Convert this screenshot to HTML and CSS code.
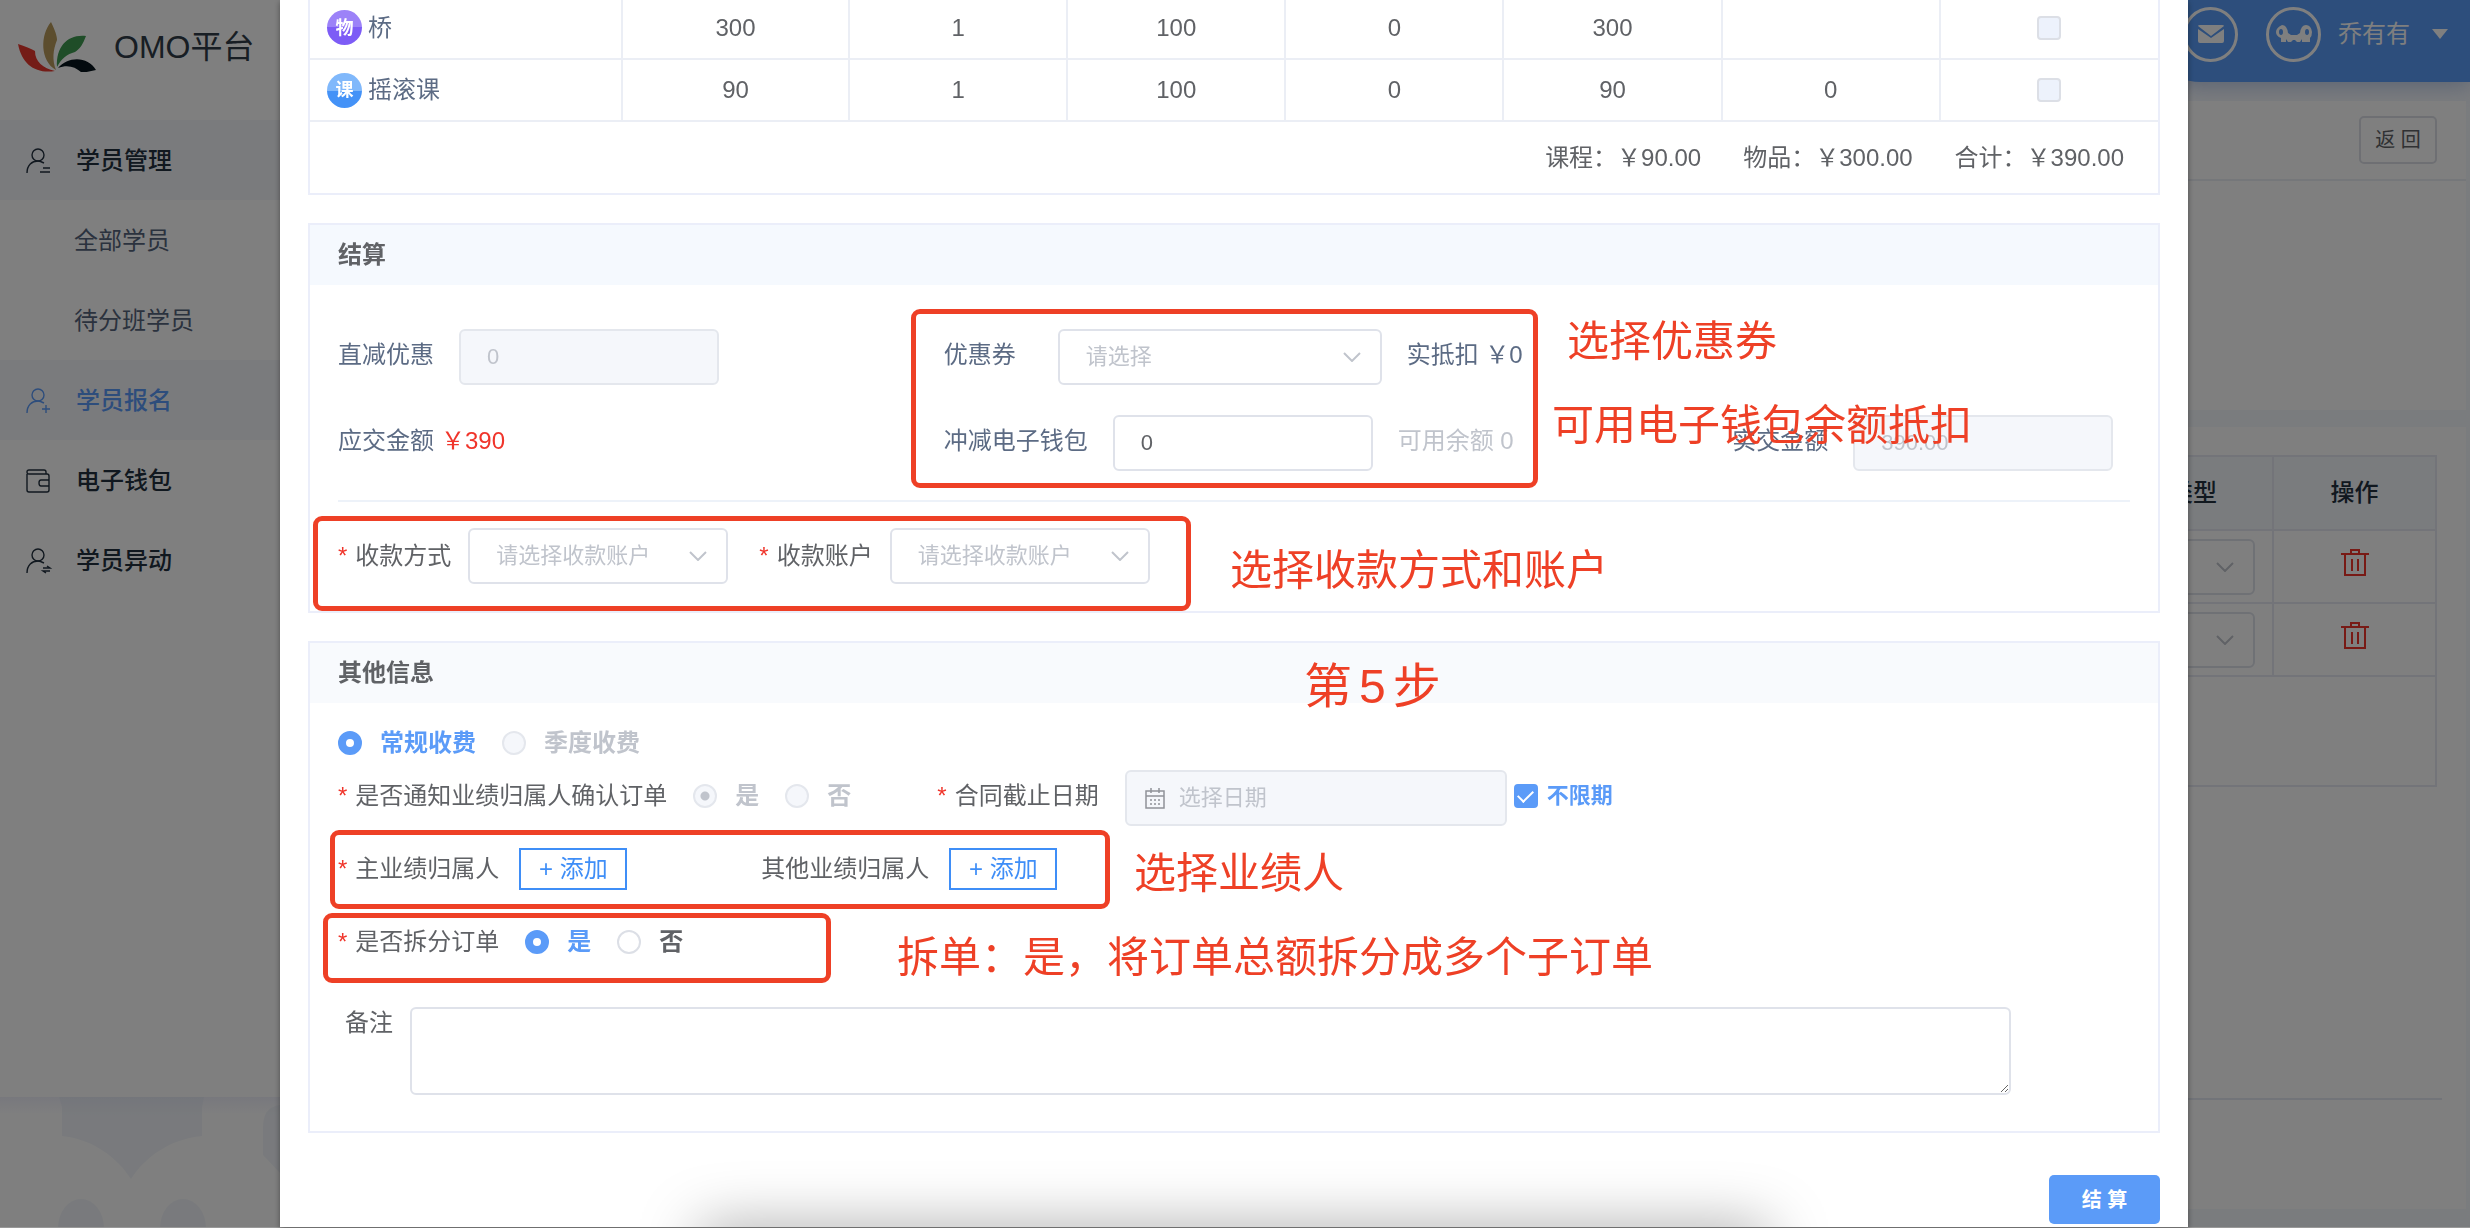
FILE: index.html
```html
<!DOCTYPE html>
<html lang="zh-CN">
<head>
<meta charset="utf-8">
<title>OMO平台</title>
<link rel="stylesheet" href="styles.css">
</head>
<body>
<div class="page">
  <aside class="sidebar">
    <div class="brand">
      <svg class="brand-logo" viewBox="0 0 78 50" aria-hidden="true">
        <path fill="#e8392f" d="M0 22C7 24 13 27 17 29C17 40 25 46 37 49C18 52 4 43 0 22Z"/>
        <path fill="#b89a5c" d="M33 0C37 8 39 14 39 18C35 28 34 38 38 48C22 39 22 13 33 0Z"/>
        <path fill="#3f9a50" d="M68 14C50 12 38 24 39 45C43 37 49 32 57 30C62 27 65 22 68 14Z"/>
        <path fill="#06141c" d="M40 46C50 34 70 34 78 48L64 51C58 45 50 42 40 46Z"/>
      </svg>
      <span>OMO平台</span>
    </div>
    <nav class="menu">
      <a class="menu-item is-open" href="#">
        <svg class="menu-icon" viewBox="0 0 24 24"><circle cx="12" cy="6" r="6"/><path d="M1 24c0-8 5-12 11-12c2 0 4 1 6 2M17 19h7M14 23h10"/></svg>
        <span>学员管理</span></a>
      <a class="menu-sub" href="#">全部学员</a>
      <a class="menu-sub" href="#">待分班学员</a>
      <a class="menu-item is-active" href="#">
        <svg class="menu-icon" viewBox="0 0 24 24"><circle cx="12" cy="6" r="6"/><path d="M1 24c0-8 5-12 11-12c2 0 4 1 6 2M16 20h8M20 16v8"/></svg>
        <span>学员报名</span></a>
      <a class="menu-item" href="#">
        <svg class="menu-icon" viewBox="0 0 24 24"><path d="M1 5v16q0 2 2 2h18q2 0 2-2V7q0-2-2-2H3q-2 0-2-2t2-2h15q2 0 2 2v2M23 11h-8q-2 0-2 3t2 3h8"/></svg>
        <span>电子钱包</span></a>
      <a class="menu-item" href="#">
        <svg class="menu-icon" viewBox="0 0 24 24"><circle cx="12" cy="6" r="6"/><path d="M1 24c0-8 5-12 11-12c2 0 4 1 6 2M17 19h7l-3-2M24 22h-7l3 2"/></svg>
        <span>学员异动</span></a>
    </nav>
    <div class="sidebar-foot">
      <svg class="pattern" viewBox="0 0 280 131" preserveAspectRatio="xMinYMin slice" aria-hidden="true">
        <path d="M59 0H204L202 10V39C170 42 145 60 131 82C117 60 92 42 62 39V10Z"/>
        <path d="M280 8Q263 10 263 30V58L280 76Z"/>
        <ellipse cx="81" cy="131" rx="23" ry="29"/><ellipse cx="183" cy="131" rx="23" ry="29"/>
      </svg>
    </div>
  </aside>
  <main class="main">
    <header class="topbar">
      <a class="round" href="#" aria-label="消息">
        <svg width="26" height="18" viewBox="0 0 26 18"><path fill="#fff" d="M2 0h22q2 0 2 1L13 11L0 1q0-1 2-1ZM0 4l13 9l13-9v12q0 2-2 2H2q-2 0-2-2Z"/></svg></a>
      <a class="round" href="#" aria-label="头像">
        <svg width="36" height="18" viewBox="0 0 36 18"><path fill="#fff" fill-rule="evenodd" d="M6 0q5 0 6 8l3 2h6l3-2q1-8 6-8t6 7q0 4-2 6v4h-8v-3l-2 3h-3l-2-2h-2l-2 2h-3l-2-3v3H5v-4Q0 11 0 7T6 0ZM5 4q-2 0-2 3t2 3t2-3t-2-3ZM31 4q-2 0-2 3t2 3t2-3t-2-3Z"/></svg></a>
      <span class="user-name">乔有有</span>
      <svg width="16" height="10" viewBox="0 0 16 10"><path fill="#fff" d="M0 0h16L8 10Z"/></svg>
    </header>
    <section class="panel panel-top">
      <div class="panel-head"><button class="back" type="button">返 回</button></div>
    </section>
    <section class="panel panel-list">
      <div class="list-box">
        <table class="list">
          <colgroup><col><col class="col-type"><col class="col-act"></colgroup>
          <thead><tr><th></th><th>类型</th><th>操作</th></tr></thead>
          <tbody>
            <tr><td></td><td><span class="select-box"><select aria-label="类型"><option></option></select><svg class="chev" viewBox="0 0 18 10"><path d="M1 1l8 8l8-8"/></svg></span></td>
              <td><button class="trash" type="button" aria-label="删除"><svg viewBox="0 0 28 28"><path d="M0 5h28M4 5v21h20V5M10 5V1h8v4M11 10v12M17 10v12"/></svg></button></td></tr>
            <tr><td></td><td><span class="select-box"><select aria-label="类型"><option></option></select><svg class="chev" viewBox="0 0 18 10"><path d="M1 1l8 8l8-8"/></svg></span></td>
              <td><button class="trash" type="button" aria-label="删除"><svg viewBox="0 0 28 28"><path d="M0 5h28M4 5v21h20V5M10 5V1h8v4M11 10v12M17 10v12"/></svg></button></td></tr>
          </tbody>
        </table>
      </div>
      <hr class="panel-rule">
    </section>
  </main>
</div>

<div class="overlay">
  <div class="modal" role="dialog" aria-label="结算">
    <section class="card order">
      <table class="order-table">
        <colgroup><col class="col-name"><col class="col-price"><col><col><col><col><col><col></colgroup>
        <tbody>
          <tr><td><span class="item"><i class="tag tag-goods">物</i>桥</span></td><td>300</td><td>1</td><td>100</td><td>0</td><td>300</td><td></td><td><input type="checkbox" disabled aria-label="选择桥"></td></tr>
          <tr><td><span class="item"><i class="tag tag-course">课</i>摇滚课</span></td><td>90</td><td>1</td><td>100</td><td>0</td><td>90</td><td>0</td><td><input type="checkbox" disabled aria-label="选择摇滚课"></td></tr>
        </tbody>
      </table>
      <div class="totals"><span>课程：￥90.00</span><span>物品：￥300.00</span><span>合计：￥390.00</span></div>
    </section>

    <section class="card">
      <h2 class="card-head head-blue">结算</h2>
      <div class="settle">
        <div class="settle-grid">
          <div class="field"><label for="cut">直减优惠</label><input class="text w-260 gap-25" id="cut" value="0" disabled></div>
          <div class="field"><label class="label-coupon" for="coupon">优惠券</label><span class="select-box w-324"><select id="coupon"><option>请选择</option></select><svg class="chev" viewBox="0 0 18 10"><path d="M1 1l8 8l8-8"/></svg></span><span class="note">实抵扣 ￥0</span></div>
          <div></div>
          <div class="field"><span class="label">应交金额</span><span class="label due">￥390</span></div>
          <div class="field"><label for="wallet">冲减电子钱包</label><input class="text w-260 gap-25" id="wallet" value="0"><span class="note muted">可用余额 0</span></div>
          <div class="field"><label for="paid">实交金额</label><input class="text w-260 gap-25" id="paid" value="390.00" disabled></div>
        </div>
        <hr class="rule">
        <div class="line pay">
          <label class="req" for="way">收款方式</label><span class="select-box w-260"><select id="way"><option>请选择收款账户</option></select><svg class="chev" viewBox="0 0 18 10"><path d="M1 1l8 8l8-8"/></svg></span>
          <label class="req next" for="acct">收款账户</label><span class="select-box w-260"><select id="acct"><option>请选择收款账户</option></select><svg class="chev" viewBox="0 0 18 10"><path d="M1 1l8 8l8-8"/></svg></span>
        </div>
      </div>
    </section>

    <section class="card">
      <h2 class="card-head">其他信息</h2>
      <div class="other">
        <div class="line row-fee">
          <label class="radio"><input type="radio" name="fee" checked>常规收费</label>
          <label class="radio"><input type="radio" name="fee" disabled>季度收费</label>
        </div>
        <div class="line row-notify">
          <span class="req">是否通知业绩归属人确认订单</span>
          <label class="radio"><input type="radio" name="notify" checked disabled>是</label>
          <label class="radio"><input type="radio" name="notify" disabled>否</label>
          <label class="req date-label" for="due">合同截止日期</label>
          <span class="date"><svg viewBox="0 0 20 22"><path d="M1 4h18v17H1ZM1 9h18M6 1v5M14 1v5"/><path stroke-dasharray="2 2" d="M5 13h10M5 17h10"/></svg><input id="due" placeholder="选择日期" disabled></span>
          <label class="check"><input type="checkbox" checked>不限期</label>
        </div>
        <div class="line row-owner">
          <span class="req">主业绩归属人</span><button class="add" type="button">+ 添加</button>
          <span class="owner-other">其他业绩归属人</span><button class="add" type="button">+ 添加</button>
        </div>
        <div class="line row-split">
          <span class="req">是否拆分订单</span>
          <label class="radio"><input type="radio" name="split" checked>是</label>
          <label class="radio"><input type="radio" name="split">否</label>
        </div>
        <div class="remark"><label for="remark">备注</label><textarea id="remark"></textarea></div>
      </div>
    </section>

    <div class="modal-foot"><button class="submit" type="button">结 算</button></div>

    <div class="mark mark-coupon"></div>
    <div class="mark mark-pay"></div>
    <div class="mark mark-owner"></div>
    <div class="mark mark-split"></div>
    <p class="tip tip-coupon">选择优惠券</p>
    <p class="tip tip-wallet">可用电子钱包余额抵扣</p>
    <p class="tip tip-pay">选择收款方式和账户</p>
    <p class="tip tip-step">第<span>5</span>步</p>
    <p class="tip tip-owner">选择业绩人</p>
    <p class="tip tip-split">拆单：是，将订单总额拆分成多个子订单</p>
    <div class="dock-shadow"></div>
  </div>
</div>
</body>
</html>
```
FILE: styles.css
```css
* { box-sizing: border-box; }

body {
  margin: 0;
  height: 100vh;
  overflow: hidden;
  font: 24px/32px "Liberation Sans", "Noto Sans CJK SC", sans-serif;
  text-spacing-trim: space-all;
  color: #606266;
}

a { color: inherit; text-decoration: none; }
button, input, select, textarea { font: inherit; color: inherit; }
h2, p { margin: 0; }
svg { display: block; }

/* page behind the dialog */
.page { display: flex; height: 100vh; background: #f5f8fd; }

.sidebar { display: flex; flex-direction: column; width: 280px; background: #fff; }
.brand { display: flex; align-items: center; gap: 18px; height: 120px; padding: 0 0 26px 18px; font-size: 32px; color: #303c48; }
.brand-logo { width: 78px; height: 50px; }
.menu-item { display: flex; align-items: center; gap: 26px; height: 80px; padding: 2px 0 0 26px; font-weight: 500; color: #22303f; }
.menu-item.is-open, .menu-item.is-active { background: #f5f6fb; }
.menu-item.is-active { color: #5b9bf8; }
.menu-icon { width: 24px; height: 24px; overflow: visible; fill: none; stroke: currentColor; stroke-width: 1.4; }
.menu-sub { display: flex; align-items: center; height: 80px; padding: 2px 0 0 74px; color: #56657c; }
.sidebar-foot { height: 131px; margin-top: auto; background: linear-gradient(#f0f1fb, #fff 18px); }
.pattern { width: 100%; height: 100%; fill: #dfe6f3; fill-opacity: .4; }

.main { display: flex; flex: 1; flex-direction: column; }
.topbar { display: flex; align-items: center; align-self: flex-end; height: 82px; padding: 0 22px 14px 44px; border-radius: 0 0 0 62px; background: #5a9df8; box-shadow: 0 4px 20px rgba(90, 130, 200, .4); color: #fff; }
.round { display: grid; place-items: center; width: 55px; height: 55px; margin-right: 28px; border: 3px solid #fff; border-radius: 50%; }
.round + .round { margin-right: 17px; }
.user-name { margin-right: 22px; }

.panel { margin-right: 4px; background: #fff; }
.panel-top { height: 309px; margin-top: 19px; }
.panel-head { display: flex; align-items: center; justify-content: flex-end; height: 80px; padding-right: 29px; border-bottom: 2px solid #ebeef5; }
.back { width: 78px; height: 48px; padding: 0; border: 2px solid #dcdfe6; border-radius: 5px; background: #fff; font-size: 20px; }
.panel-list { height: 782px; margin-top: 17px; padding: 28px 24px 0 0; }
.list-box { height: 332px; margin-right: 5px; border: 2px solid #e6e9f3; }
.list { width: 100%; border-collapse: collapse; table-layout: fixed; }
.list th, .list td { height: 73px; padding: 0; border-right: 2px solid #e6e9f3; border-bottom: 2px solid #e6e9f3; text-align: center; }
.list th { background: #f5f8fd; font-weight: 500; color: #22303f; }
.list tr > :last-child { border-right: 0; }
.col-type { width: 160px; }
.col-act { width: 162px; }
.list .select-box { width: 124px; }
.trash { padding: 0; border: 0; background: none; }
.trash svg { width: 28px; height: 28px; fill: none; stroke: #f0352b; stroke-width: 2; }
.panel-rule { height: 2px; margin: 311px 0 0; border: 0; background: #e4e9f2; }

/* dialog */
.overlay { position: fixed; inset: 0; padding: 0 282px 0 280px; border-bottom: 1px solid #999; background: rgba(0, 0, 0, .5); }
.modal { position: relative; height: 100%; padding: 0 28px; overflow: hidden; background: #fff; box-shadow: 0 2px 6px rgba(0, 0, 0, .4); }

.card { margin-bottom: 28px; border: 2px solid #ebeefa; }
.order { margin-top: -5px; }
.card-head { display: flex; align-items: center; height: 60px; padding-left: 28px; background: #f8fafd; font-size: 24px; font-weight: 700; }
.head-blue { background: #f5f9fe; }

.order-table { width: 100%; border-collapse: collapse; table-layout: fixed; }
.order-table td { height: 62px; padding: 0; border-bottom: 2px solid #ebeef5; border-right: 2px solid #ebeef5; text-align: center; }
.order-table td:last-child { border-right: 0; }
.col-name { width: 312px; }
.col-price { width: 227px; }
.item { display: flex; align-items: center; gap: 6px; padding-left: 17px; color: #5c6b84; }
.tag { display: grid; place-items: center; width: 35px; height: 35px; border-radius: 50%; font-size: 18px; font-style: normal; font-weight: 700; line-height: 20px; color: #fff; }
.tag-goods { background: linear-gradient(#9c82f8 50%, #7d5cf6 50%); }
.tag-course { background: linear-gradient(#80b8fb 50%, #4492f7 50%); }
.totals { display: flex; align-items: center; justify-content: flex-end; gap: 42px; height: 71px; padding-right: 34px; }

.settle { padding: 44px 28px 27px; }
.settle-grid { display: grid; grid-template-columns: 606fr 789fr 398fr; row-gap: 30px; }
.field, .line { display: flex; align-items: center; white-space: nowrap; }
.field { height: 56px; color: #5c6b84; }
.field label, .label, .note { padding-bottom: 4px; }
.label-coupon { width: 114px; }
.note { margin-left: 25px; }
.muted { color: #c0c4cc; }
.due { margin-left: 7px; color: #f0352b; }
.gap-25 { margin-left: 25px; }
.w-260 { width: 260px; }
.w-324 { width: 324px; }
.rule { height: 2px; margin: 29px 0 26px; border: 0; background: #edf2f9; }

.text, .select-box select, .date, textarea { height: 56px; border: 2px solid #dfe2ea; border-radius: 6px; background: #fff; font-size: 22px; }
.text { padding: 0 26px; color: #606266; }
.text:disabled { border-color: #e4e7ed; background: #f5f7fb; color: #c0c4cc; }
.select-box { display: inline-grid; align-items: center; }
.select-box > * { grid-area: 1 / 1; }
.select-box select { width: 100%; padding: 0 26px; appearance: none; color: #c0c4cc; }
.chev { justify-self: end; width: 18px; height: 10px; margin-right: 21px; fill: none; stroke: #c0c4cc; stroke-width: 2; pointer-events: none; }

.req::before { content: "*"; margin-right: 8px; color: #f0352b; }
.pay .select-box { margin-left: 17px; }
.next { margin-left: 31px; }

input[type="radio"], input[type="checkbox"] { flex: none; width: 24px; height: 24px; margin: 0; border: 2px solid #dcdfe6; appearance: none; background: #fff; }
input[type="radio"] { border-radius: 50%; }
input[type="radio"]:checked { border: 8px solid #5b9bf8; }
input[type="radio"]:disabled { border: 2px solid #e4e7ed; background: #f5f7fb; }
input[type="radio"]:checked:disabled { background: radial-gradient(#c0c4cc 4px, #f5f7fb 5px); }
input[type="checkbox"] { border-radius: 4px; }
input[type="checkbox"]:disabled { display: block; margin: 0 auto; background: #edf2fc; }
input[type="checkbox"]:checked { display: grid; place-items: center; border-color: #5b9bf8; background: #5b9bf8; }
input[type="checkbox"]:checked::after { content: ""; width: 7px; height: 13px; margin-bottom: 4px; border: solid #fff; border-width: 0 2px 2px 0; transform: rotate(45deg); }

.other { padding: 24px 28px 36px; }
.radio { display: flex; align-items: center; gap: 18px; margin-left: 26px; font-weight: 700; }
.radio:has(:checked) { color: #5b9bf8; }
.radio:has(:disabled) { color: #c0c4cc; }
.row-fee .radio:first-child { margin-left: 0; }
.row-fee { height: 32px; }
.row-notify { height: 56px; margin-top: 11px; }
.row-notify > :not(.date) { padding-bottom: 4px; }
.date-label { margin-left: 86px; }
.date { display: flex; align-items: center; width: 382px; margin-left: 26px; padding-left: 18px; border-color: #e4e7ed; background: #f5f7fb; }
.date svg { width: 20px; height: 22px; fill: none; stroke: #909399; stroke-width: 1.5; }
.date input { flex: 1; min-width: 0; padding: 0 0 0 14px; border: 0; background: none; }
.date input::placeholder { color: #c0c4cc; }
.check { display: flex; align-items: center; gap: 9px; margin-left: 7px; font-size: 22px; font-weight: 700; color: #5b9bf8; }
.row-owner { height: 42px; margin-top: 22px; }
.add { width: 108px; height: 42px; margin-left: 20px; padding: 0; border: 2px solid #3f8ef7; background: #fff; line-height: 36px; color: #3f8ef7; }
.owner-other { margin-left: 134px; }
.row-split { height: 32px; margin-top: 36px; }
.remark { display: flex; gap: 17px; margin-top: 49px; padding: 0 119px 0 7px; }
.remark textarea { flex: 1; height: 88px; resize: both; }

.modal-foot { display: flex; justify-content: flex-end; margin-top: 42px; }
.submit { width: 111px; height: 49px; padding: 0; border: 0; border-radius: 5px; background: #5b9bf8; font-size: 20px; font-weight: 700; color: #fff; }

/* hand-drawn notes laid over the form */
.mark { position: absolute; border: 5px solid #ee4026; border-radius: 9px; pointer-events: none; }
.mark-coupon { left: 631px; top: 309px; width: 627px; height: 179px; }
.mark-pay { left: 33px; top: 516px; width: 878px; height: 95px; }
.mark-owner { left: 50px; top: 830px; width: 780px; height: 79px; }
.mark-split { left: 43px; top: 913px; width: 508px; height: 70px; }
.tip { position: absolute; font-size: 42px; line-height: 60px; color: #ee4026; white-space: nowrap; }
.tip-coupon { left: 1287px; top: 312px; }
.tip-wallet { left: 1272px; top: 396px; }
.tip-pay { left: 950px; top: 541px; }
.tip-step { left: 1024px; top: 657px; font-size: 48px; }
.tip-step span { margin: 0 7px; }
.tip-owner { left: 854px; top: 844px; }
.tip-split { left: 617px; top: 928px; }
.dock-shadow { position: absolute; left: 430px; right: 430px; bottom: -40px; height: 30px; box-shadow: 0 0 60px 10px rgba(0, 0, 0, .35); pointer-events: none; }
```
